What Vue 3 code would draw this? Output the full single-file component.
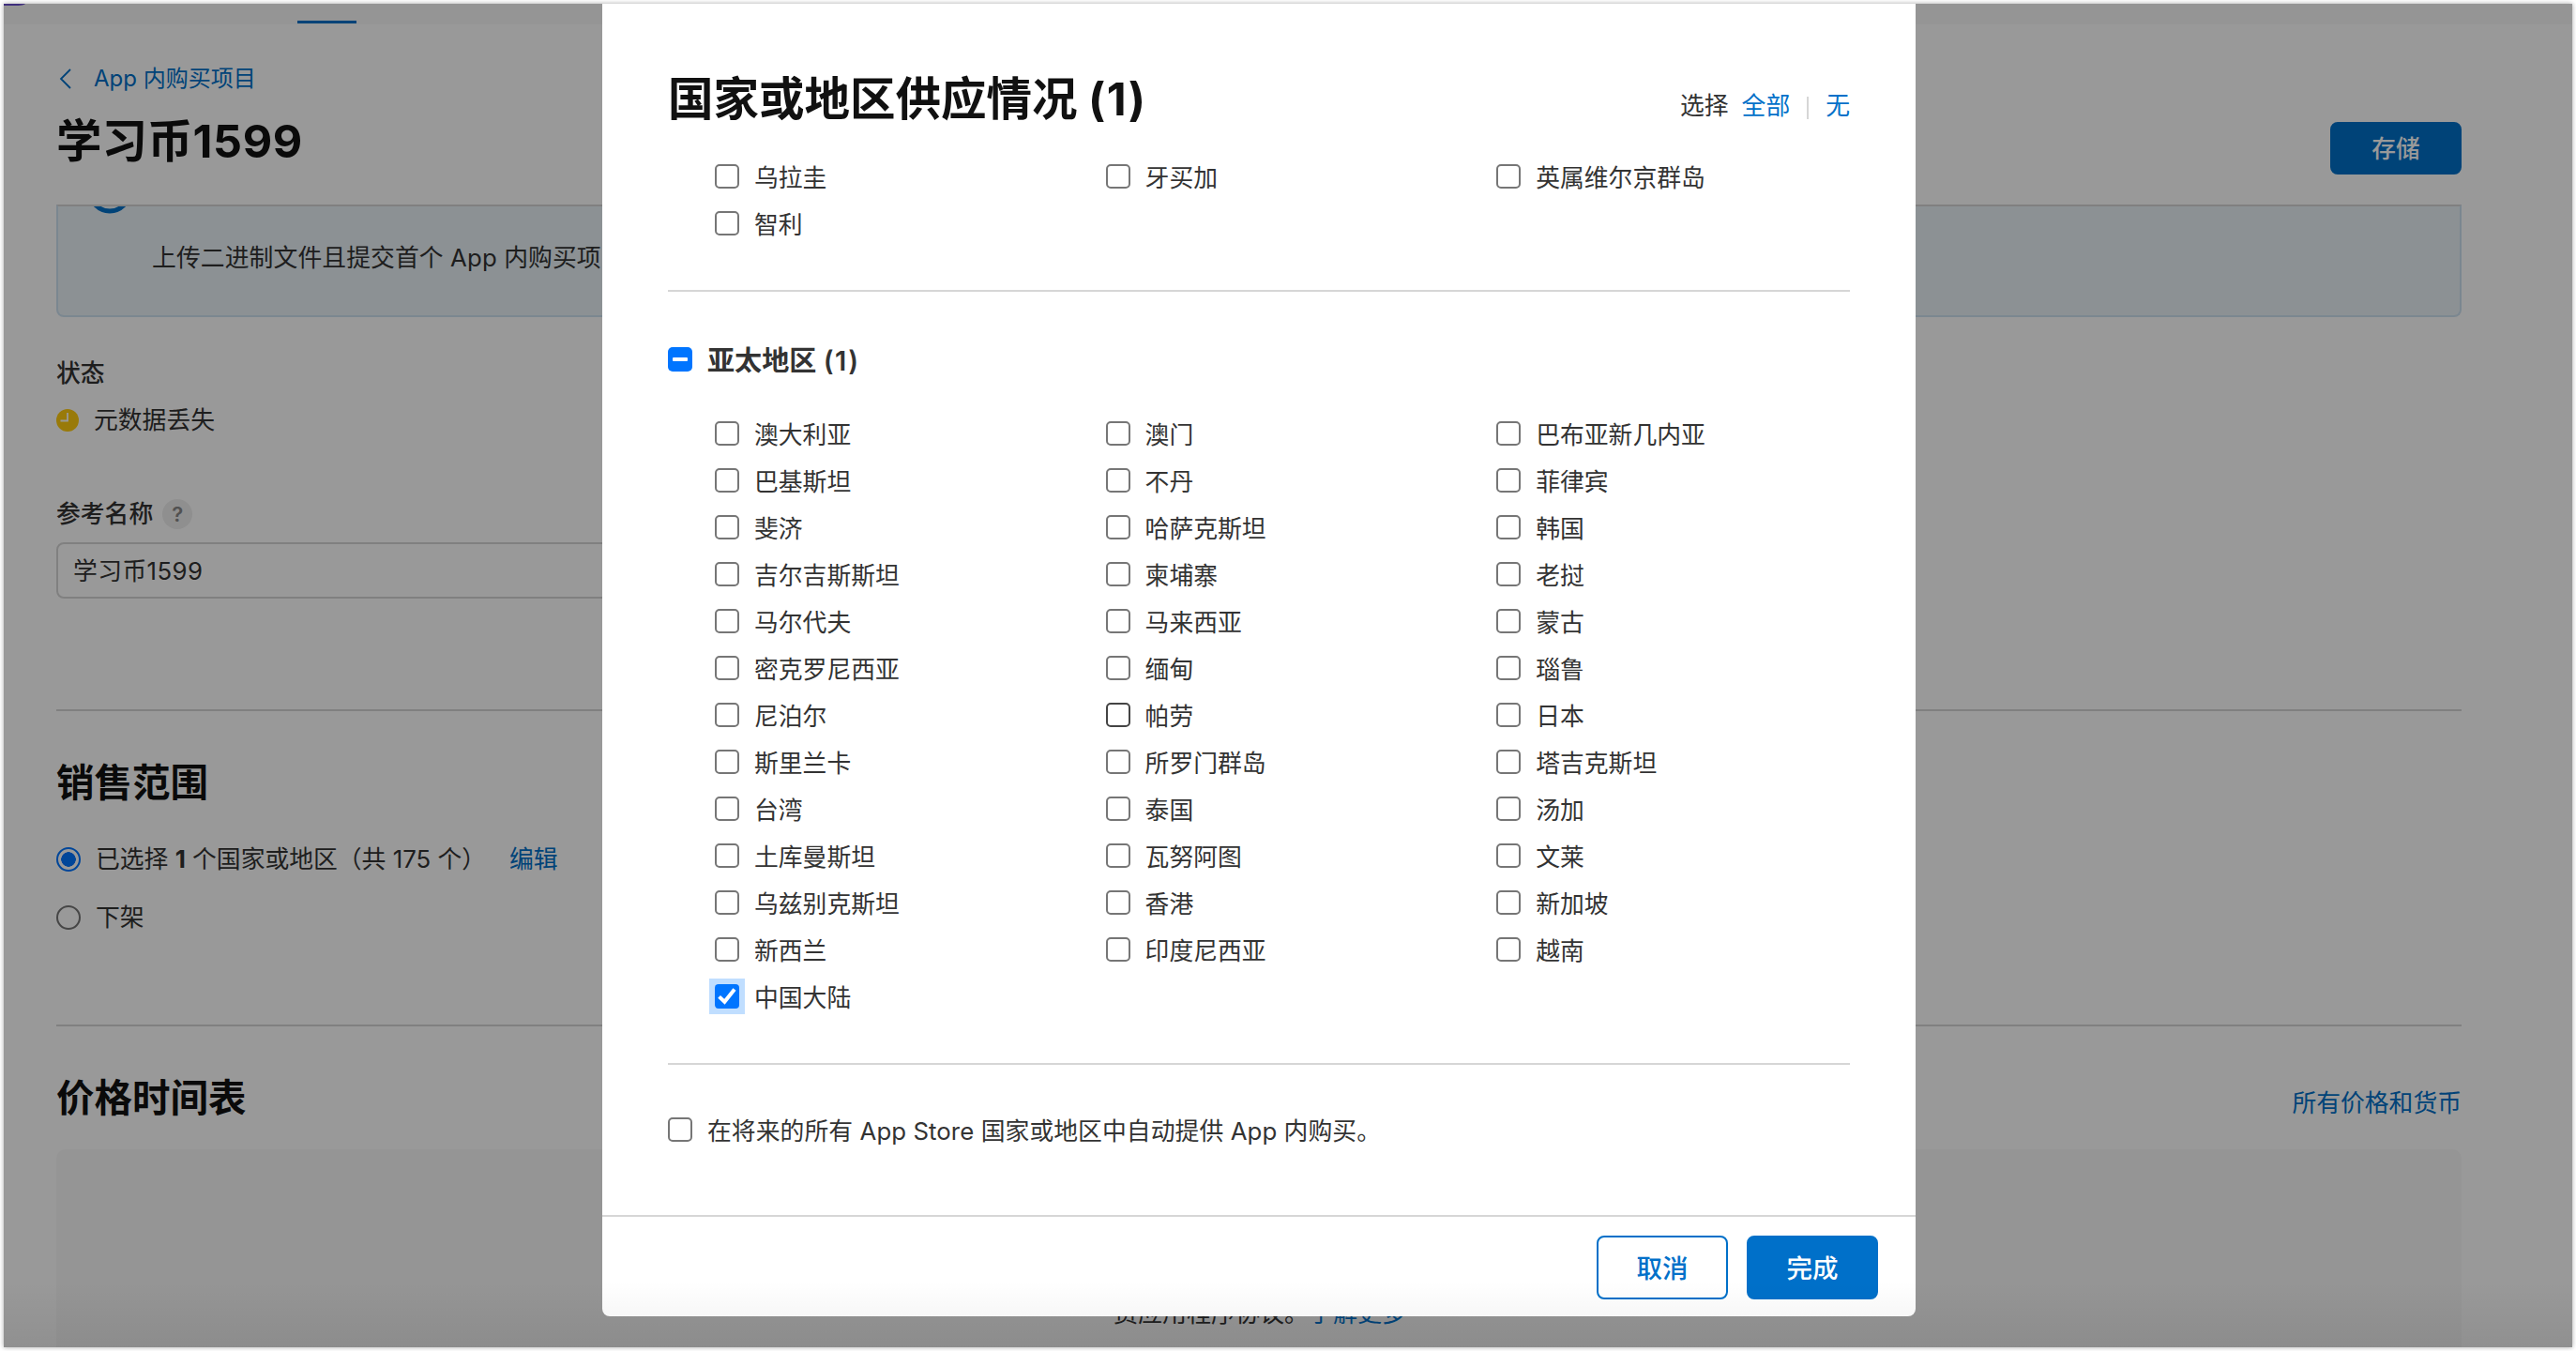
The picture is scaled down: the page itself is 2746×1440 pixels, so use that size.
<template>
    <div class="window">
        <div class="page">
            <div class="nav-bar">
                <span class="nav-logo"></span>
                <span class="nav-indicator"></span>
            </div>

            <div class="content">
                <a class="back-link">
                    <svg class="back-icon" width="14" height="22" viewBox="0 0 14 22" fill="none">
                        <path d="M12 1L2 11L12 21" stroke="#0070c9" stroke-width="1.8"/>
                    </svg>
                    <span>App 内购买项目</span>
                </a>

                <div class="title-row">
                    <h1 class="page-title">学习币<span class="title-number">1599</span></h1>
                    <button class="button button-save">存储</button>
                </div>

                <div class="banner">
                    <svg class="banner-icon" width="48" height="8" viewBox="0 0 48 8" fill="none">
                        <circle cx="24" cy="-16" r="21" stroke="#0070c9" stroke-width="5"/>
                    </svg>
                    <p class="banner-text">上传二进制文件且提交首个 App 内购买项目</p>
                </div>

                <div class="field-label status-label">状态</div>
                <div class="status">
                    <svg width="24" height="24" viewBox="0 0 24 24" fill="none">
                        <circle cx="12" cy="12" r="12" fill="#ffcc10"/>
                        <path d="M12 4V12.5H4.5" stroke="#fff" stroke-width="1.8"/>
                    </svg>
                    <span>元数据丢失</span>
                </div>

                <div class="field-label name-label">
                    <span>参考名称</span>
                    <span class="help">?</span>
                </div>
                <div class="text-input">学习币1599</div>

                <div class="divider divider-first"></div>

                <h2 class="section-title">销售范围</h2>
                <div class="radio-row">
                    <span class="radio radio-checked"></span>
                    <span class="radio-text">已选择 <b>1</b> 个国家或地区（共 175 个）</span>
                    <a class="link edit-link">编辑</a>
                </div>
                <div class="radio-row radio-row-second">
                    <span class="radio"></span>
                    <span class="radio-text">下架</span>
                </div>

                <div class="divider divider-second"></div>

                <div class="price-row">
                    <h2 class="section-title">价格时间表</h2>
                    <a class="link">所有价格和货币</a>
                </div>
                <div class="price-panel">
                    <p>费应用程序协议。<a class="link">了解更多</a></p>
                </div>
            </div>
        </div>

        <div class="overlay">
            <div class="modal">
                <div class="modal-body">
                    <div class="modal-header">
                        <h2 class="modal-title">国家或地区供应情况 <span class="modal-count">(1)</span></h2>
                        <div class="select-links">
                            <span>选择</span>
                            <a class="link">全部</a>
                            <i class="separator"></i>
                            <a class="link">无</a>
                        </div>
                    </div>

                    <div class="countries countries-americas">
                        <label v-for="name in americas" :key="name" class="country">
                            <span class="checkbox"></span>
                            <span class="country-name">{{ name }}</span>
                        </label>
                    </div>

                    <div class="modal-divider"></div>

                    <div class="region">
                        <span class="checkbox checkbox-mixed"></span>
                        <span class="country-name">亚太地区 <span class="region-count">(1)</span></span>
                    </div>

                    <div class="countries">
                        <label v-for="name in asiaPacific" :key="name" class="country">
                            <span
                                class="checkbox"
                                :class="{ 'checkbox-checked': name === selected, 'checkbox-hover': name === hovered }"
                            >
                                <svg v-if="name === selected" width="26" height="26" viewBox="0 0 26 26" fill="none">
                                    <path d="M4.6 13.4L10.4 18.8L21 5.4" stroke="#fff" stroke-width="4"/>
                                </svg>
                            </span>
                            <span class="country-name">{{ name }}</span>
                        </label>
                    </div>

                    <div class="modal-divider"></div>

                    <label class="country future">
                        <span class="checkbox"></span>
                        <span class="country-name">在将来的所有 App Store 国家或地区中自动提供 App 内购买。</span>
                    </label>
                </div>

                <div class="modal-footer">
                    <button class="button button-cancel">取消</button>
                    <button class="button button-done">完成</button>
                </div>
            </div>
        </div>
    </div>
</template>

<script setup>
import { ref } from 'vue'

const americas = ['乌拉圭', '牙买加', '英属维尔京群岛', '智利']

const asiaPacific = [
    '澳大利亚', '澳门', '巴布亚新几内亚',
    '巴基斯坦', '不丹', '菲律宾',
    '斐济', '哈萨克斯坦', '韩国',
    '吉尔吉斯斯坦', '柬埔寨', '老挝',
    '马尔代夫', '马来西亚', '蒙古',
    '密克罗尼西亚', '缅甸', '瑙鲁',
    '尼泊尔', '帕劳', '日本',
    '斯里兰卡', '所罗门群岛', '塔吉克斯坦',
    '台湾', '泰国', '汤加',
    '土库曼斯坦', '瓦努阿图', '文莱',
    '乌兹别克斯坦', '香港', '新加坡',
    '新西兰', '印度尼西亚', '越南',
    '中国大陆'
]

const selected = ref('中国大陆')
const hovered = ref('帕劳')
</script>

<style>
body {
    margin: 0;
    background: #fff;
    overflow: hidden;
}
</style>

<style scoped>
.window {
    position: relative;
    width: 2738px;
    height: 1432px;
    margin: 4px;
    overflow: hidden;
    box-shadow: 0 0 5px rgba(0, 0, 0, 0.35);
    background: #fff;
    color: #333;
    font-family: Inter, "Noto Sans CJK SC", sans-serif;
    font-size: 25.8px;
    line-height: 40px;
}

/* bottom shade lies over the page and the modal */
.window::after {
    content: "";
    position: absolute;
    left: 0;
    right: 0;
    bottom: 0;
    height: 70px;
    background: linear-gradient(rgba(0, 0, 0, 0), rgba(0, 0, 0, 0.06));
}

h1,
h2,
p {
    margin: 0;
}

.link {
    color: #0070c9;
}

.nav-bar {
    display: flex;
    height: 22px;
    background: #f8f8f8;
}

.nav-logo {
    width: 23px;
    height: 2px;
    background: #6a4fd0;
    border-bottom-right-radius: 12px 2px;
}

.nav-indicator {
    width: 63px;
    height: 3px;
    margin: 18px 0 0 290px;
    background: #0070c9;
}

.content {
    width: 2564px;
    margin-left: 56px;
    padding-top: 38px;
}

.back-link {
    display: flex;
    align-items: center;
    gap: 27px;
    height: 40px;
    padding-left: 3px;
    box-sizing: border-box;
    color: #0070c9;
    font-size: 24px;
}

.back-link span {
    margin-left: -4px;
}

.title-row {
    display: flex;
    justify-content: space-between;
    height: 66px;
    margin-top: 16px;
}

.page-title {
    color: #111;
    font-size: 48.5px;
    font-weight: 700;
    line-height: 60px;
    padding-top: 1px;
}

.title-number {
    letter-spacing: 0.6px;
}

.button {
    display: block;
    width: 140px;
    padding: 0 0 3px;
    border: 2px solid #0070c9;
    border-radius: 8px;
    box-sizing: border-box;
    background: #0070c9;
    color: #fff;
    font-family: inherit;
    font-weight: 500;
}

.button-save {
    height: 56px;
    margin-top: 10px;
    font-size: 25.7px;
}

.banner {
    position: relative;
    height: 120px;
    margin-top: 32px;
    padding: 35px 0 0 100px;
    box-sizing: border-box;
    border: 2px solid #cde1f0;
    border-top-color: #d6d6d6;
    border-radius: 0 0 8px 8px;
    background: #e9f2f7;
}

.banner-icon {
    position: absolute;
    left: 31px;
    top: 0;
}

.banner-text {
    width: 520px;
    white-space: nowrap;
    letter-spacing: 0.1px;
}

.field-label {
    font-weight: 500;
}

.status-label {
    margin-top: 40px;
}

.status {
    display: flex;
    align-items: center;
    gap: 16px;
    margin-top: 10px;
}

.name-label {
    display: flex;
    align-items: center;
    gap: 10px;
    margin-top: 60px;
}

.help {
    width: 32px;
    height: 32px;
    border-radius: 50%;
    background: #eee;
    color: #888;
    font-size: 22px;
    font-weight: 600;
    line-height: 32px;
    text-align: center;
}

.text-input {
    width: 1200px;
    height: 60px;
    margin-top: 10px;
    padding: 1px 16px 0;
    box-sizing: border-box;
    border: 2px solid #d6d6d6;
    border-radius: 8px;
    line-height: 56px;
    letter-spacing: 0.4px;
}

.divider {
    height: 2px;
    background: #d6d6d6;
}

.divider-first {
    margin-top: 118px;
}

.divider-second {
    margin-top: 94px;
}

.section-title {
    color: #111;
    font-size: 40.5px;
    font-weight: 700;
    line-height: 60px;
}

.divider-first + .section-title {
    margin-top: 47px;
}

.radio-row {
    display: flex;
    align-items: center;
    height: 40px;
    margin-top: 31px;
}

.radio-row-second {
    margin-top: 22px;
}

.radio {
    width: 26px;
    height: 26px;
    box-sizing: border-box;
    border: 2px solid #767676;
    border-radius: 50%;
}

.radio-checked {
    border-color: #0075ff;
    background: radial-gradient(circle, #0075ff 7.5px, transparent 8px);
}

.radio-text {
    margin-left: 16px;
}

.edit-link {
    margin-left: 25px;
}

.price-row {
    display: flex;
    align-items: center;
    justify-content: space-between;
    margin-top: 47px;
}

.price-row .link {
    padding-top: 9px;
}

.price-panel {
    height: 211px;
    margin-top: 24px;
    padding: 155px 0 0 1127px;
    box-sizing: border-box;
    border-radius: 10px 10px 0 0;
    background: #f8f8f8;
    font-size: 26px;
}

.overlay {
    position: absolute;
    inset: 0;
    padding-left: 638px;
    background: rgba(0, 0, 0, 0.4);
}

.modal {
    display: flex;
    flex-direction: column;
    justify-content: space-between;
    width: 1400px;
    height: 1399px;
    border-radius: 0 0 8px 8px;
    background: #fff;
}

.modal-body {
    padding: 72px 70px 0;
}

.modal-header {
    display: flex;
    justify-content: space-between;
    height: 59px;
}

.modal-title {
    color: #111;
    font-size: 48.5px;
    font-weight: 700;
    line-height: 60px;
}

.modal-count {
    letter-spacing: 1.4px;
}

.select-links {
    display: flex;
    align-items: center;
    gap: 14px;
    padding-top: 15px;
    height: 44px;
}

.separator {
    width: 2px;
    height: 24px;
    margin: 3px 4px 0;
    background: #d6d6d6;
}

.countries {
    display: grid;
    grid-template-columns: repeat(3, 416.6px);
    grid-auto-rows: 50px;
    margin: 34px 0 0 50px;
}

.countries-americas {
    margin-top: 28px;
}

.country,
.region {
    display: flex;
    align-items: center;
    gap: 16px;
    white-space: nowrap;
}

.country-name {
    padding-top: 3px;
}

.region-count {
    letter-spacing: 1.5px;
}

.checkbox {
    flex: none;
    width: 26px;
    height: 26px;
    box-sizing: border-box;
    border: 2px solid #767676;
    border-radius: 5px;
    background: #fff;
}

.checkbox-hover {
    border-color: #444;
}

/* focus ring has square corners, so it is drawn by its own box */
.checkbox-checked {
    position: relative;
    z-index: 0;
    border: 0;
    background: transparent;
}

.checkbox-checked::before {
    content: "";
    position: absolute;
    inset: -6px;
    z-index: -1;
    background: #c0deff;
}

.checkbox-checked svg {
    display: block;
    border-radius: 4px;
    background: #0075ff;
}

.checkbox-mixed {
    display: flex;
    align-items: center;
    justify-content: center;
    border: 0;
    background: #0075ff;
}

.checkbox-mixed::before {
    content: "";
    width: 16px;
    height: 4px;
    border-radius: 1px;
    background: #fff;
}

.modal-divider {
    height: 2px;
    margin-top: 46px;
    background: #d6d6d6;
}

.region {
    height: 40px;
    margin-top: 52px;
    font-size: 29.1px;
    font-weight: 600;
}

.future {
    height: 40px;
    margin-top: 49px;
    letter-spacing: 0.07px;
}

.modal-footer {
    display: flex;
    justify-content: flex-end;
    gap: 20px;
    height: 108px;
    padding: 20px 40px 0;
    box-sizing: border-box;
    border-top: 2px solid #d6d6d6;
}

.modal-footer .button {
    height: 68px;
    font-size: 27.5px;
}

.button-cancel {
    background: #fff;
    color: #0070c9;
}
</style>
